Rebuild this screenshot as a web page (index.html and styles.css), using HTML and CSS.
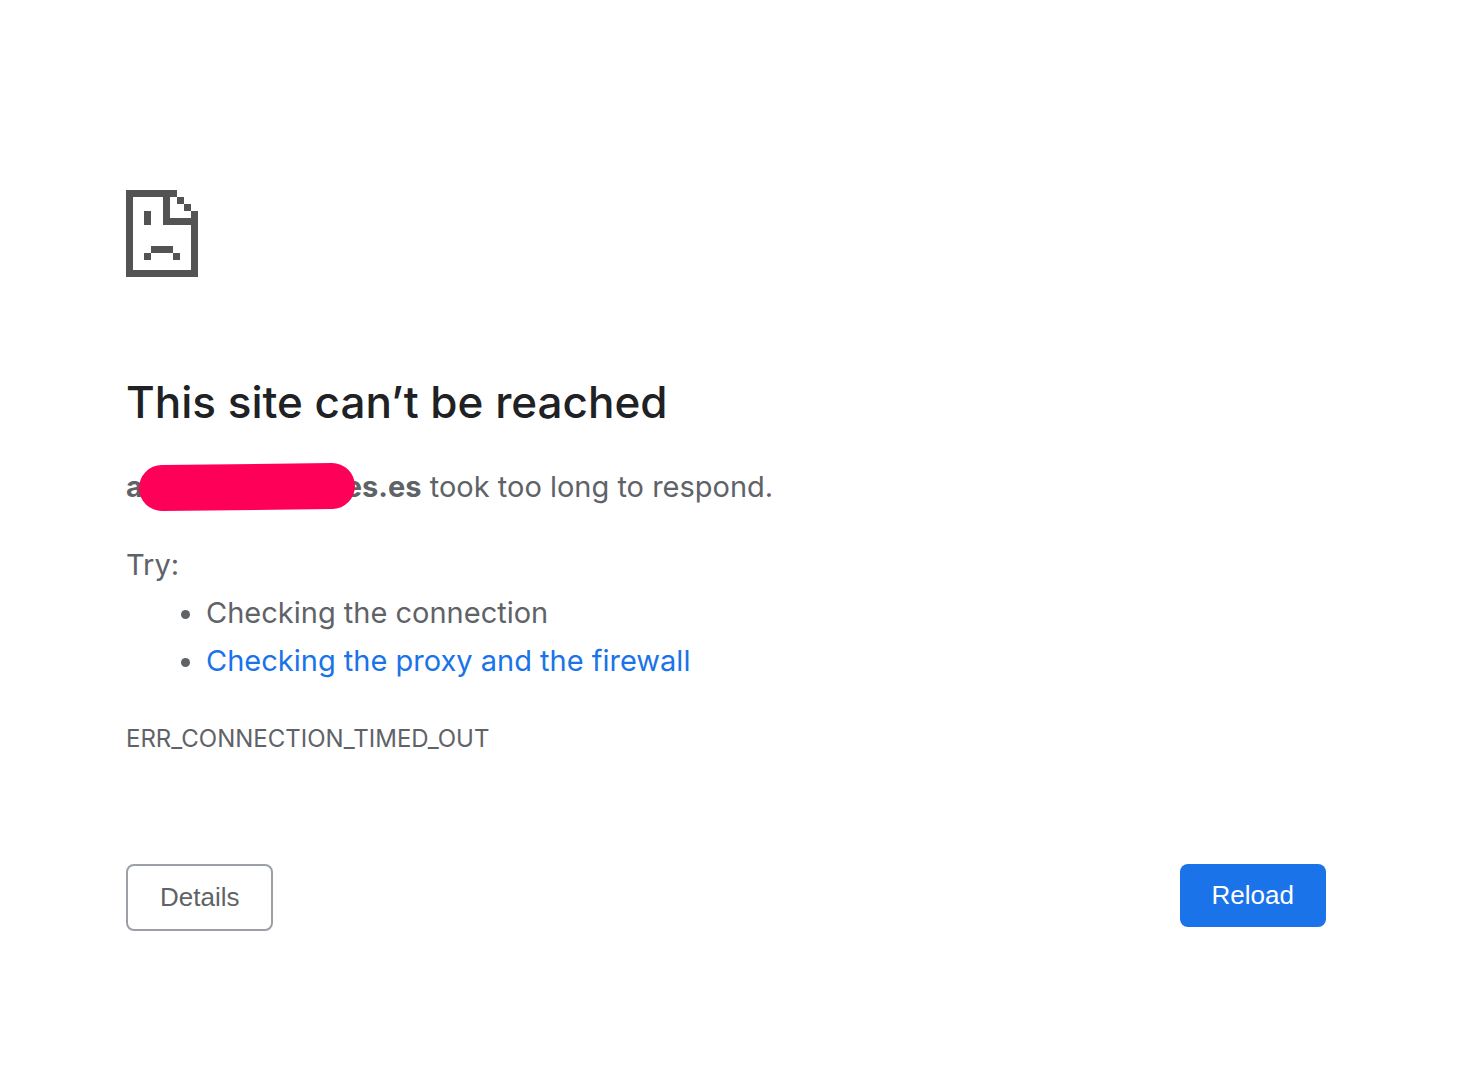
FILE: index.html
```html
<!DOCTYPE html>
<html lang="en">
<head>
<meta charset="utf-8">
<meta name="viewport" content="width=device-width, initial-scale=1">
<title>This site can’t be reached</title>
<link rel="stylesheet" href="styles.css">
</head>
<body>
<main class="error-page">
  <svg class="error-icon" viewBox="0 0 216 261" shape-rendering="crispEdges" aria-hidden="true">
    <path d="M0 0H153V21H132V84H195V63H216V261H0ZM21 21V240H195V105H111V21Z" fill-rule="evenodd"/>
    <path d="M153 21h21v21h-21zM174 42h21v21h-21zM54 63h21v42h-21zM75 168h66v21h-66zM54 189h21v21h-21zM141 189h21v21h-21z"/>
  </svg>
  <h1 class="error-title">This site can’t be reached</h1>
  <p class="error-summary"><strong>a<span class="redaction"><svg class="redaction-mark" viewBox="0 0 216 48" aria-hidden="true"><path d="M23 25L193 23"/></svg></span>es.es</strong> took too long to respond.</p>
  <section class="suggestions">
    <p class="suggestions-title">Try:</p>
    <ul class="suggestions-list">
      <li>Checking the connection</li>
      <li><a href="#proxy">Checking the proxy and the firewall</a></li>
    </ul>
  </section>
  <p class="error-code">ERR_CONNECTION_TIMED_OUT</p>
  <div class="actions">
    <button class="button button-secondary" type="button">Details</button>
    <button class="button button-primary" type="button">Reload</button>
  </div>
</main>
</body>
</html>
```
FILE: styles.css
```css
body {
  margin: 0;
  background: #fff;
  color: #5f6368;
  font-family: Inter, "Noto Sans", sans-serif;
  font-size: 29px;
  line-height: 48px;
}

.error-page {
  padding: 190px 134px 80px 126px;
}

.error-icon {
  display: block;
  width: 72px;
  height: 87px;
  fill: #535353;
}

.error-title {
  margin: 96px 0 32px;
  color: #202124;
  font-size: 44px;
  font-weight: 500;
  line-height: 58px;
}

.error-summary {
  margin: 0 0 30px;
}

.redaction {
  display: inline-block;
  position: relative;
  width: 202px;
  height: 20px;
}

.redaction-mark {
  position: absolute;
  top: -14px;
  left: -4px;
  width: 216px;
  height: 48px;
  fill: none;
  stroke: #ff0059;
  stroke-width: 46px;
  stroke-linecap: round;
}

.suggestions-title {
  margin: 0;
}

.suggestions-list {
  margin: 0;
  padding-left: 80px;
}

.suggestions-list a {
  color: #1a73e8;
  text-decoration: none;
}

.error-code {
  margin: 34px 0 0;
  font-size: 24px;
  line-height: 40px;
}

.actions {
  display: flex;
  justify-content: space-between;
  align-items: flex-start;
  margin-top: 105px;
}

.button {
  padding: 16px 32px;
  border: 0;
  border-radius: 8px;
  font-family: "Liberation Sans", Arial, sans-serif;
  font-size: 26px;
  line-height: 31px;
  cursor: pointer;
}

.button-primary {
  background: #1a73e8;
  color: #fff;
}

.button-secondary {
  border: 2px solid #9aa0a6;
  background: #fff;
  color: #5f6368;
}
```
